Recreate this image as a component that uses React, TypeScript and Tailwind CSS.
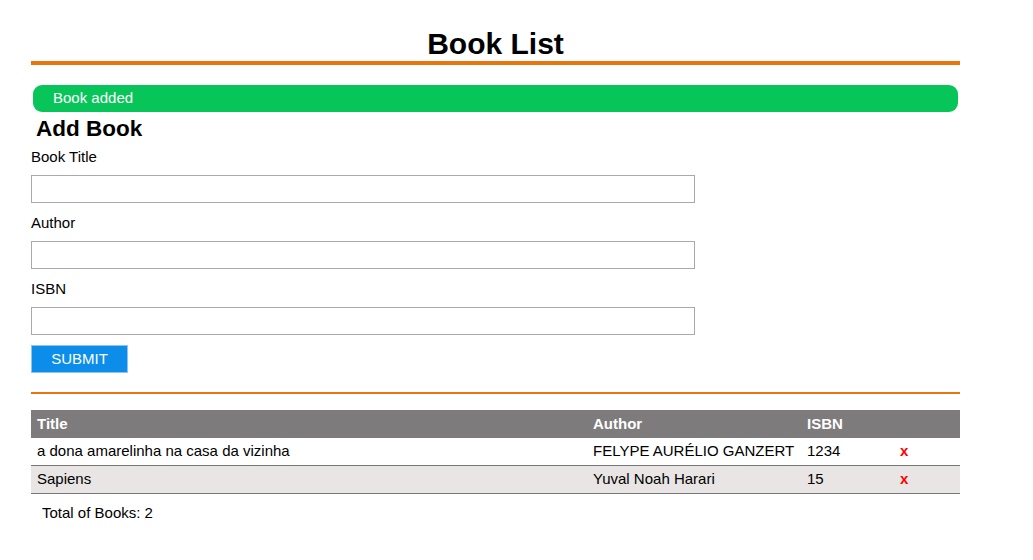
import React from 'react';

type Book = { title: string; author: string; isbn: string };

const books: Book[] = [
  { title: 'a dona amarelinha na casa da vizinha', author: 'FELYPE AURÉLIO GANZERT', isbn: '1234' },
  { title: 'Sapiens', author: 'Yuval Noah Harari', isbn: '15' }
];

const Field = ({ label }: { label: string }) => (
  <div className="mb-[11px]">
    <label className="block text-[15px] leading-[17px] text-black">{label}</label>
    <input
      type="text"
      className="mt-[10px] block h-[28px] w-[664px] border border-[#a9a9a9] bg-white px-2 outline-none"
    />
  </div>
);

const App = () => {
  return (
    <div
      className="min-h-[560px] bg-white text-black"
      style={{ fontFamily: '"Liberation Sans", Arial, sans-serif' }}
    >
      <div className="ml-[31px] w-[929px] pt-[27px]">
        <h1 className="border-b-4 border-[#e8760f] text-center text-[30px] font-bold leading-[34px]">
          Book List
        </h1>

        <div className="mx-[2px] mt-[20px] flex h-[27px] items-center rounded-[9px] bg-[#08c55a] pl-[20px] text-[15px] text-white">
          Book added
        </div>

        <h2 className="ml-[5px] mt-[4px] text-[22.5px] font-bold leading-[26px]">Add Book</h2>

        <form className="mt-[6px]" onSubmit={(e) => e.preventDefault()}>
          <Field label="Book Title" />
          <Field label="Author" />
          <Field label="ISBN" />
          <button
            type="submit"
            className="-mt-px h-[28px] w-[97px] border border-[#8fc3f5] bg-[#0b8de9] text-[15px] text-white"
          >
            SUBMIT
          </button>
        </form>

        <div className="mt-[19px] h-[2px] bg-[#e8760f]" />

        {/* book table */}
        <div className="mt-[16px] text-[15px]">
          <div className="grid h-[28px] grid-cols-[556px_214px_93px_66px] items-center bg-[#7d7b7b] font-bold text-white">
            <div className="px-[6px]">Title</div>
            <div className="px-[6px]">Author</div>
            <div className="px-[6px]">ISBN</div>
            <div className="px-[6px]"></div>
          </div>
          {books.map((book, i) => (
            <div
              key={book.isbn}
              className={`grid h-[28px] grid-cols-[556px_214px_93px_66px] items-center border-b border-[#777777] ${
                i % 2 === 1 ? 'bg-[#e8e5e4]' : 'bg-white'
              }`}
            >
              <div className="px-[6px]">{book.title}</div>
              <div className="px-[6px]">{book.author}</div>
              <div className="px-[6px]">{book.isbn}</div>
              <div className="px-[6px] font-bold text-[#ff0000]">x</div>
            </div>
          ))}
        </div>

        <p className="ml-[11px] mt-[10px] text-[15px] leading-[17px]">Total of Books: 2</p>
      </div>
    </div>
  );
};

export default App;
